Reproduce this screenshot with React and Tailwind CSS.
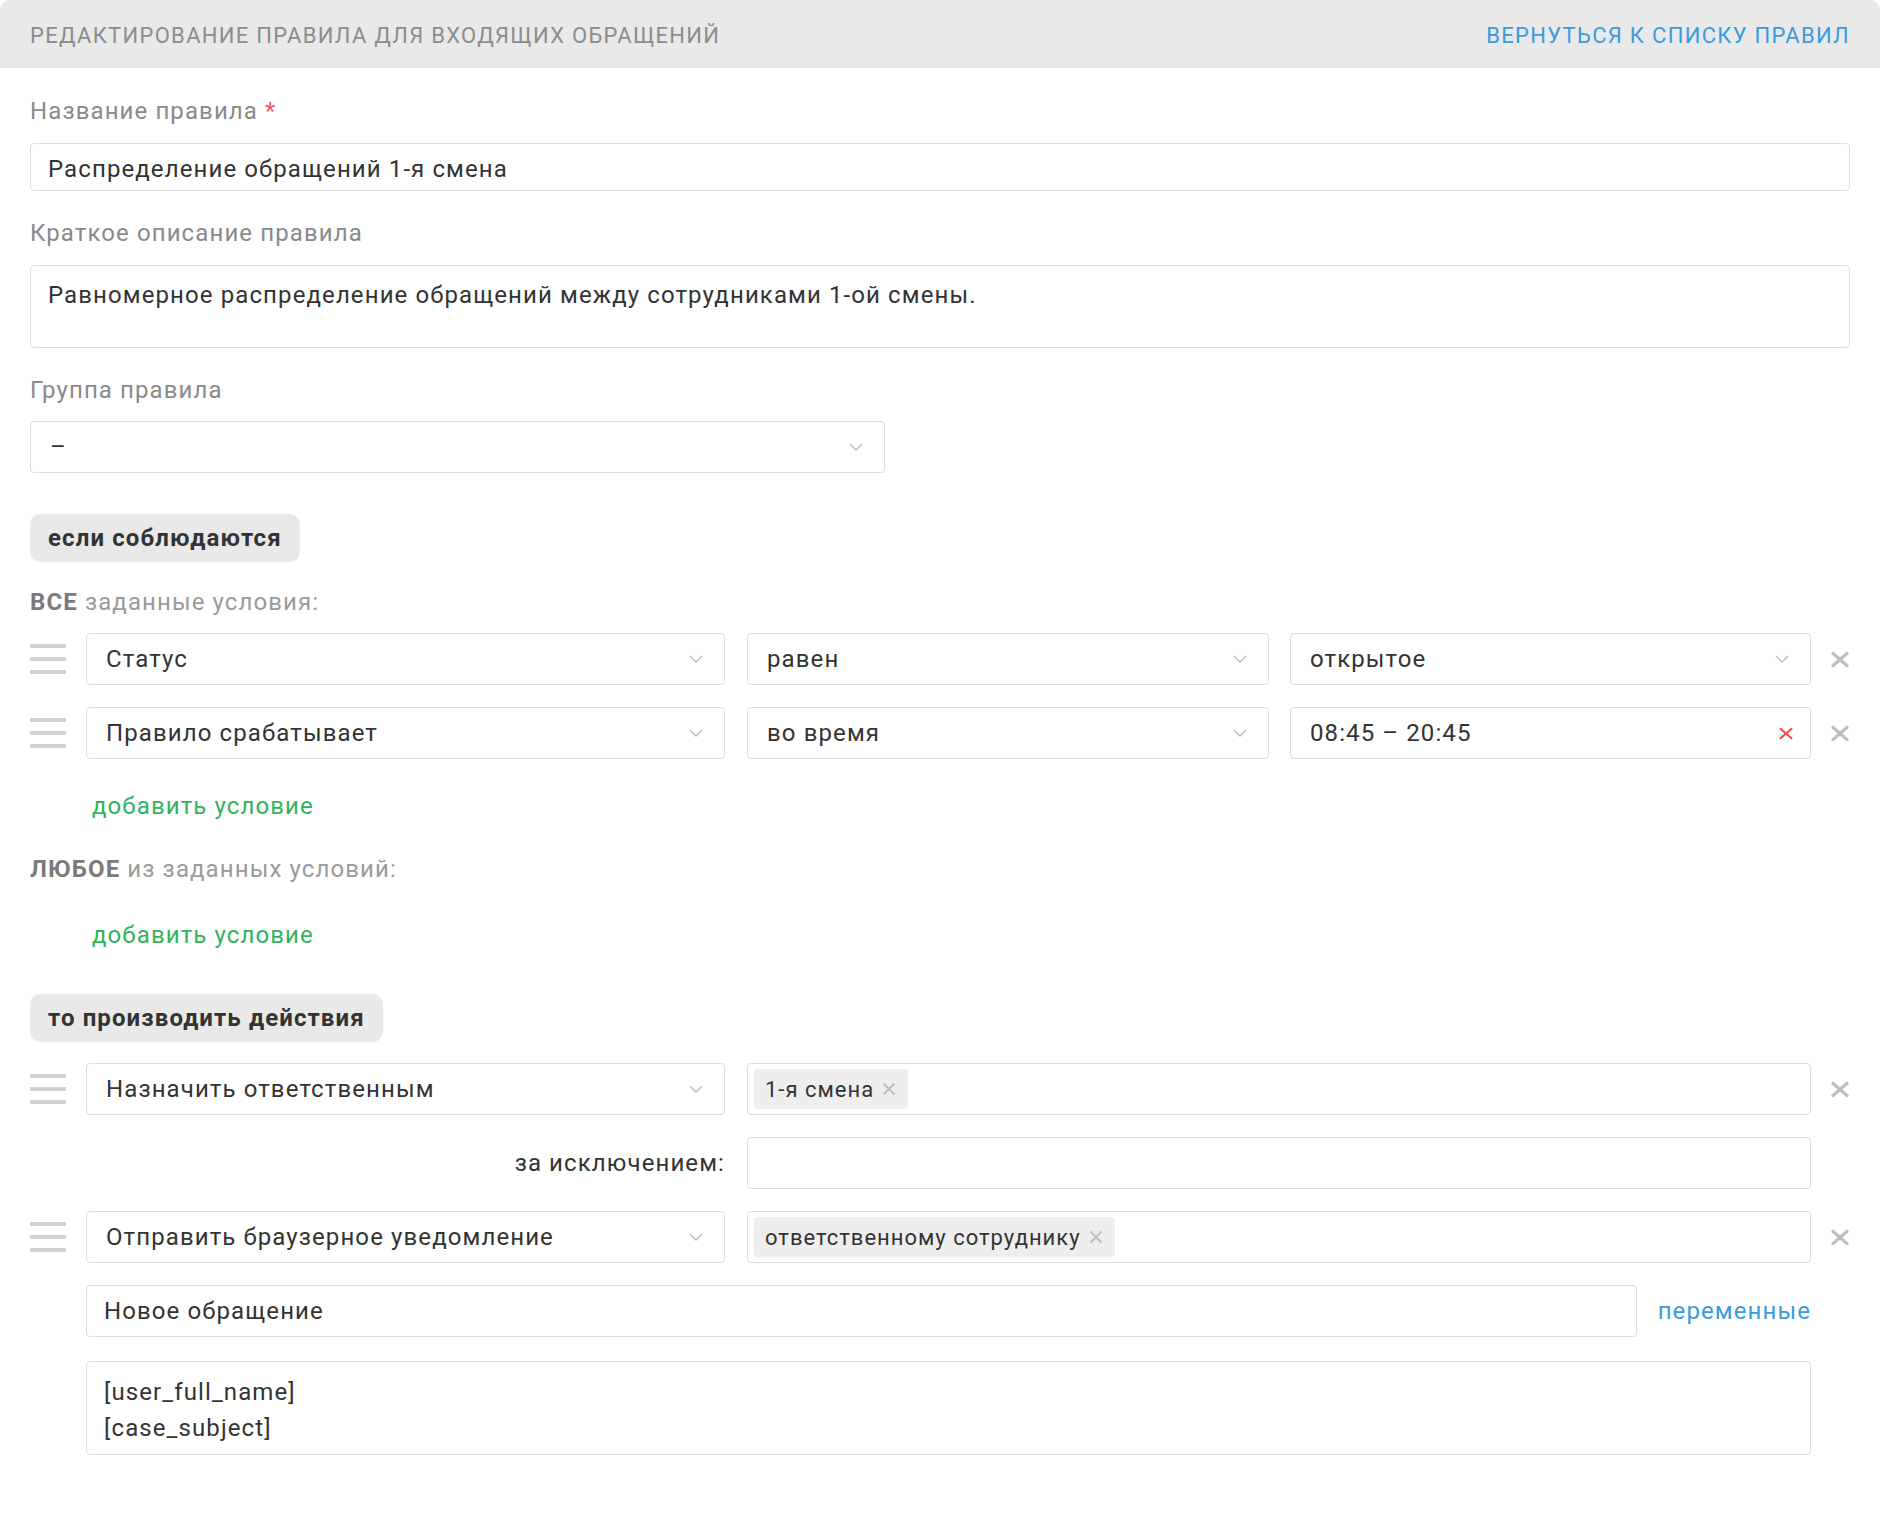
import React from 'react';

const fieldBase =
    'bg-white border border-[#dddddd] rounded-[4px] flex items-center text-[24px] tracking-[1.1px] text-[#333]';

function Chevron() {
    return (
        <svg width="14" height="8" viewBox="0 0 14 8" fill="none" className="shrink-0">
            <path d="M1 1l6 6 6-6" stroke="#b9b9b9" strokeWidth="1.3" />
        </svg>
    );
}

function CloseX({ color = '#bdbdbd', size = 20, width = 3 }) {
    return (
        <svg width={size} height={size - 3} viewBox="0 0 20 17" fill="none" className="shrink-0">
            <path d="M2 1.5l16 14M18 1.5l-16 14" stroke={color} strokeWidth={width} />
        </svg>
    );
}

function Handle() {
    return (
        <div className="w-[36px] flex flex-col gap-[9px] shrink-0">
            <div className="h-[4px] bg-[#d2d2d2]" />
            <div className="h-[4px] bg-[#d2d2d2]" />
            <div className="h-[4px] bg-[#d2d2d2]" />
        </div>
    );
}

function Select({ children, className = '' }) {
    return (
        <div className={`${fieldBase} h-[52px] justify-between pl-[19px] pr-[21px] ${className}`}>
            <span>{children}</span>
            <Chevron />
        </div>
    );
}

function Chip({ children }) {
    return (
        <span className="h-[40px] ml-[6px] pl-[11px] pr-[12px] bg-[#eeeeee] rounded-[4px] inline-flex items-center gap-[8px] text-[22px] tracking-[1px]">
            {children}
            <svg width="14" height="14" viewBox="0 0 14 14" fill="none" className="shrink-0">
                <path d="M1.5 1.5l11 11M12.5 1.5l-11 11" stroke="#bdbdbd" strokeWidth="1.8" />
            </svg>
        </span>
    );
}

function RemoveBtn() {
    return (
        <div className="w-[39px] shrink-0 flex justify-end">
            <CloseX />
        </div>
    );
}

function Badge({ children, className = '' }) {
    return (
        <div className={`inline-flex items-center h-[48px] px-[18px] rounded-[10px] bg-[#e9e9e9] text-[24px] tracking-[1.1px] font-bold text-[#333] ${className}`}>
            {children}
        </div>
    );
}

const label = 'leading-[28px] text-[24px] tracking-[1.1px] text-[#8a8a8a]';
const addLink = 'ml-[62px] leading-[28px] text-[24px] tracking-[1.1px] text-[#2fb45c]';

export default function App() {
    return (
        <div className="min-h-screen bg-white font-[family-name:Roboto,sans-serif]">
            {/* Header */}
            <div className="h-[68px] bg-[#e9e9e9] rounded-t-[10px] flex items-center justify-between px-[30px] pt-[2px]">
                <span className="text-[22px] uppercase text-[#8c8c8c] tracking-[1.3px]">
                    Редактирование правила для входящих обращений
                </span>
                <a className="text-[22px] uppercase text-[#3a9bdc] tracking-[1.3px]">Вернуться к списку правил</a>
            </div>

            <div className="px-[30px] pb-[80px]">
                <div className={`mt-[29px] ${label}`}>
                    Название правила <span className="text-[#f05a5a]">*</span>
                </div>
                <div className={`${fieldBase} h-[48px] mt-[18px] px-[17px] pt-[4px]`}>Распределение обращений 1-я смена</div>

                <div className={`mt-[28px] ${label}`}>Краткое описание правила</div>
                <div className="mt-[18px] h-[83px] bg-white border border-[#dddddd] rounded-[4px] px-[17px] pt-[15px] leading-[28px] text-[24px] tracking-[1.1px] text-[#333]">
                    Равномерное распределение обращений между сотрудниками 1-ой смены.
                </div>

                <div className={`mt-[28px] ${label}`}>Группа правила</div>
                <Select className="mt-[17px] w-[855px]">–</Select>

                {/* Conditions */}
                <Badge className="mt-[41px]">если соблюдаются</Badge>

                <div className={`mt-[26px] ${label} text-[#9a9a9a]`}>
                    <span className="font-bold text-[#7a7a7a]">ВСЕ</span> заданные условия:
                </div>

                <div className="mt-[17px] flex flex-col gap-[22px]">
                    <div className="flex items-center">
                        <Handle />
                        <Select className="ml-[20px] w-[639px]">Статус</Select>
                        <Select className="ml-[22px] w-[522px]">равен</Select>
                        <Select className="ml-[21px] flex-1">открытое</Select>
                        <RemoveBtn />
                    </div>
                    <div className="flex items-center">
                        <Handle />
                        <Select className="ml-[20px] w-[639px]">Правило срабатывает</Select>
                        <Select className="ml-[22px] w-[522px]">во время</Select>
                        <div className={`${fieldBase} h-[52px] ml-[21px] flex-1 justify-between pl-[19px] pr-[16px]`}>
                            <span>08:45 – 20:45</span>
                            <CloseX color="#f04c4c" size={16} width={2.6} />
                        </div>
                        <RemoveBtn />
                    </div>
                </div>

                <div className={`mt-[33px] ${addLink}`}>добавить условие</div>

                <div className={`mt-[35px] ${label} text-[#9a9a9a]`}>
                    <span className="font-bold text-[#7a7a7a]">ЛЮБОЕ</span> из заданных условий:
                </div>

                <div className={`mt-[38px] ${addLink}`}>добавить условие</div>

                {/* Actions */}
                <Badge className="mt-[45px]">то производить действия</Badge>

                <div className="mt-[21px] flex flex-col gap-[22px]">
                    <div className="flex items-center">
                        <Handle />
                        <Select className="ml-[20px] w-[639px]">Назначить ответственным</Select>
                        <div className={`${fieldBase} h-[52px] ml-[22px] flex-1`}>
                            <Chip>1-я смена</Chip>
                        </div>
                        <RemoveBtn />
                    </div>
                    <div className="flex items-center">
                        <div className="w-[695px] text-right text-[24px] tracking-[1.1px] text-[#333]">за исключением:</div>
                        <div className={`${fieldBase} h-[52px] ml-[22px] flex-1`} />
                        <div className="w-[39px] shrink-0" />
                    </div>
                    <div className="flex items-center">
                        <Handle />
                        <Select className="ml-[20px] w-[639px]">Отправить браузерное уведомление</Select>
                        <div className={`${fieldBase} h-[52px] ml-[22px] flex-1`}>
                            <Chip>ответственному сотруднику</Chip>
                        </div>
                        <RemoveBtn />
                    </div>
                    <div className="flex items-center pl-[56px] pr-[39px]">
                        <div className={`${fieldBase} h-[52px] flex-1 px-[17px]`}>Новое обращение</div>
                        <a className="ml-[21px] text-[24px] tracking-[1.1px] text-[#3a9bdc]">переменные</a>
                    </div>
                </div>

                <div className="mt-[24px] ml-[56px] mr-[39px] h-[94px] bg-white border border-[#dddddd] rounded-[4px] px-[17px] pt-[12px] leading-[36px] text-[24px] tracking-[1.1px] text-[#333]">
                    <div>[user_full_name]</div>
                    <div>[case_subject]</div>
                </div>
            </div>
        </div>
    );
}
